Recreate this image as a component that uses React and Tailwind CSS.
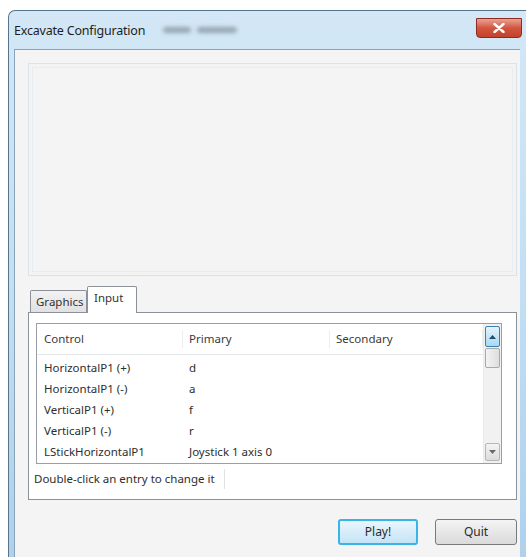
import React from "react";

const bindings = [
  { control: "HorizontalP1 (+)", primary: "d", secondary: "" },
  { control: "HorizontalP1 (-)", primary: "a", secondary: "" },
  { control: "VerticalP1 (+)", primary: "f", secondary: "" },
  { control: "VerticalP1 (-)", primary: "r", secondary: "" },
  { control: "LStickHorizontalP1", primary: "Joystick 1 axis 0", secondary: "" },
];

function ScrollArrow({ up, active }) {
  return (
    <div
      className={
        active
          ? "h-[21px] w-full flex items-center justify-center rounded-[2px] border border-[#3c7fb1] bg-gradient-to-b from-[#e3f4fc] to-[#a9d9f2]"
          : "h-[18px] w-full flex items-center justify-center rounded-[2px] border border-[#b6b6b6] bg-gradient-to-b from-[#f4f4f4] to-[#dcdcdc]"
      }
    >
      <svg width="7" height="4" viewBox="0 0 7 4">
        <path d={up ? "M0 4 L3.5 0 L7 4 Z" : "M0 0 L3.5 4 L7 0 Z"} fill={active ? "#1c4e74" : "#6a6a6a"} />
      </svg>
    </div>
  );
}

export default function App() {
  return (
    <div className="w-[526px] h-[557px] overflow-hidden bg-white pt-[10px] pl-[8px] font-['Noto_Sans','Open_Sans',sans-serif] text-[#2b2b2b]">
      {/* window frame */}
      <div className="w-[540px] h-[560px] rounded-tl-[7px] border-t border-l border-[#56748c] bg-gradient-to-b from-[#d3e7f6] via-[#c2dff3] to-[#aed0ec] pl-[5px]">
        {/* title bar */}
        <div className="relative h-[38px] flex items-start">
          <span className="mt-[11px] text-[12.5px] tracking-[-0.2px] text-[#1e1e1e]">Excavate Configuration</span>
          <div className="mt-[16px] ml-[18px] flex gap-[6px] blur-[2px] opacity-70">
            <div className="w-[28px] h-[6px] rounded bg-[#7d8a96]" />
            <div className="w-[40px] h-[6px] rounded bg-[#7d8a96]" />
          </div>
          <div className="absolute left-[462px] top-[7px] w-[46px] h-[20px] rounded-b-[4px] border border-[#8c2b22] bg-gradient-to-b from-[#e9a193] via-[#d2553f] to-[#c5412c] flex items-center justify-center">
            <svg width="12" height="10" viewBox="0 0 12 10">
              <path d="M1.5 1 L10.5 9 M10.5 1 L1.5 9" stroke="#ffffff" strokeWidth="2.4" strokeLinecap="round" />
            </svg>
          </div>
        </div>

        {/* client area */}
        <div className="w-[506px] h-[520px] border-t border-l border-[#8aa3b7] bg-[#f4f4f4] pl-[13px] pt-[13px]">
          <div className="w-[489px] flex flex-col">
            {/* preview panel */}
            <div className="h-[213px] border border-[#dbe3e8] bg-[#f3f3f3] p-[3px]">
              <div className="h-full border border-[#e6ecef] bg-[#f4f4f4]" />
            </div>

            {/* tab strip */}
            <div className="mt-[9px] flex items-end pl-[2px] h-[27px] text-[11.5px]">
              <div className="h-[22px] w-[57px] pl-[5px] flex items-center border border-b-0 border-[#8c9099] rounded-t-[2px] bg-gradient-to-b from-[#f2f2f2] to-[#e1e1e1] text-[#333]">
                Graphics
              </div>
              <div className="relative -mb-px h-[27px] w-[50px] pl-[6px] pt-[2px] border border-b-0 border-[#8c9099] rounded-t-[2px] bg-white z-10 text-[#333]">
                Input
              </div>
            </div>

            {/* tab page */}
            <div className="h-[188px] border border-[#8c9099] bg-white pt-[10px] pl-[7px] pr-[14px]">
              <div className="h-[141px] border border-[#9a9ea6] flex text-[11.5px]">
                <div className="flex-1 flex flex-col">
                  <div className="h-[31px] grid grid-cols-[146px_147px_1fr] items-center border-b border-[#e5e8ea] text-[#3a3a3a]">
                    <span className="pl-[7px] border-r border-[#eeeeee]">Control</span>
                    <span className="pl-[6px] border-r border-[#eeeeee]">Primary</span>
                    <span className="pl-[6px] border-r border-[#eeeeee]">Secondary</span>
                  </div>
                  <div className="flex flex-col pt-[2px]">
                    {bindings.map((b) => (
                      <div key={b.control} className="h-[21px] grid grid-cols-[146px_147px_1fr] items-center text-[#2e2e2e]">
                        <span className="pl-[7px]">{b.control}</span>
                        <span className="pl-[6px]">{b.primary}</span>
                        <span className="pl-[6px]">{b.secondary}</span>
                      </div>
                    ))}
                  </div>
                </div>
                {/* vertical scrollbar */}
                <div className="w-[18px] flex flex-col bg-[#f1f1f1] border-l border-[#ebebeb] pt-[2px] px-[1px] pb-[2px]">
                  <ScrollArrow up active />
                  <div className="mt-[1px] h-[20px] rounded-[2px] border border-[#a9a9a9] bg-gradient-to-r from-[#f3f3f3] to-[#dedede]" />
                  <div className="flex-1" />
                  <ScrollArrow />
                </div>
              </div>
              <div className="mt-[5px] -ml-[3px] w-[192px] h-[20px] flex items-center whitespace-nowrap pl-[1px] border-r border-[#e2e2e2] text-[11.5px] text-[#2e2e2e]">
                Double-click an entry to change it
              </div>
            </div>

            {/* dialog buttons */}
            <div className="mt-[19px] flex justify-end gap-[17px] text-[12px]">
              <button className="w-[80px] h-[26px] rounded-[3px] border-2 border-[#39b4e6] bg-gradient-to-b from-[#eaf6fd] to-[#c4e4f6] text-[#2b2b2b]">
                Play!
              </button>
              <button className="w-[82px] h-[26px] rounded-[3px] border border-[#7a7a7a] bg-gradient-to-b from-[#f4f4f4] to-[#dadada] text-[#2b2b2b]">
                Quit
              </button>
            </div>
          </div>
        </div>
      </div>
    </div>
  );
}
